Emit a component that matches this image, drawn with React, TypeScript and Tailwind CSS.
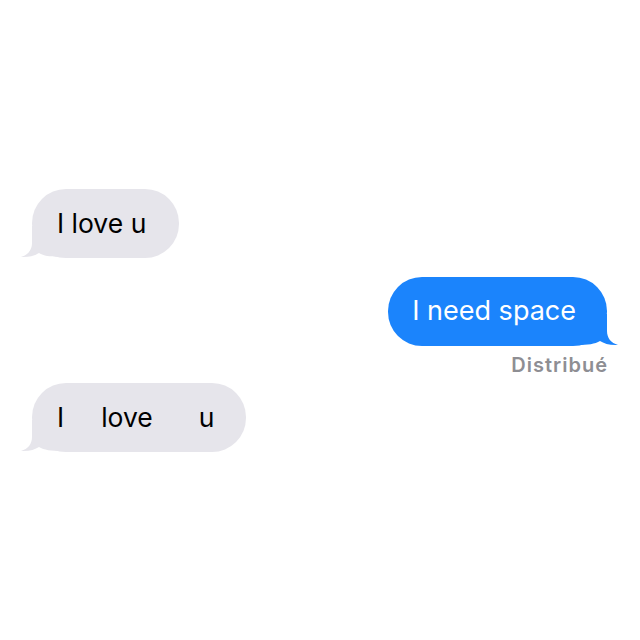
import React from "react";

function LeftTail() {
  return (
    <svg className="absolute left-[-14px] bottom-0" width="44" height="32" viewBox="0 0 44 32">
      <path d="M14,0 L14,17 C14,24 10,29 3,31 C11,31.5 17,29.5 21,27 C26,30 33,31 44,31 L44,0 Z" fill="#e6e5eb" />
    </svg>
  );
}

function RightTail() {
  return (
    <svg className="absolute right-[-14px] bottom-0" width="44" height="32" viewBox="0 0 44 32">
      <g transform="translate(44,0) scale(-1,1)">
        <path d="M14,0 L14,17 C14,24 10,29 3,31 C11,31.5 17,29.5 21,27 C26,30 33,31 44,31 L44,0 Z" fill="#1b84fc" />
      </g>
    </svg>
  );
}

export default function App() {
  const font = { fontFamily: "Inter, 'Liberation Sans', Arial, sans-serif" };
  return (
    <div className="w-[640px] h-[640px] bg-white flex flex-col" style={font}>
      <div className="h-[189px] shrink-0" />
      <div className="pl-[32px] flex">
        <div className="relative h-[69px] rounded-[34px] bg-[#e6e5eb] pl-[25px] pr-[33px] flex items-center text-[26.5px] text-black">
          <LeftTail />
          <span className="relative">I love u</span>
        </div>
      </div>
      <div className="h-[19px] shrink-0" />
      <div className="pr-[33px] flex justify-end">
        <div className="relative h-[69px] rounded-[34px] bg-[#1b84fc] pl-[24px] pr-[31px] flex items-center text-[27px] text-white">
          <RightTail />
          <span className="relative">I need space</span>
        </div>
      </div>
      <div className="pr-[32px] flex justify-end h-[37px] items-center">
        <span className="text-[20px] leading-none font-semibold tracking-[1px] text-[#8e8e93]">Distribué</span>
      </div>
      <div className="pl-[32px] flex">
        <div className="relative h-[69px] rounded-[34px] bg-[#e6e5eb] pl-[25px] pr-[32px] flex items-center text-[26.5px] text-black">
          <LeftTail />
          <span className="relative flex">
            <span>I</span>
            <span className="ml-[37px]">love</span>
            <span className="ml-[46px]">u</span>
          </span>
        </div>
      </div>
    </div>
  );
}
